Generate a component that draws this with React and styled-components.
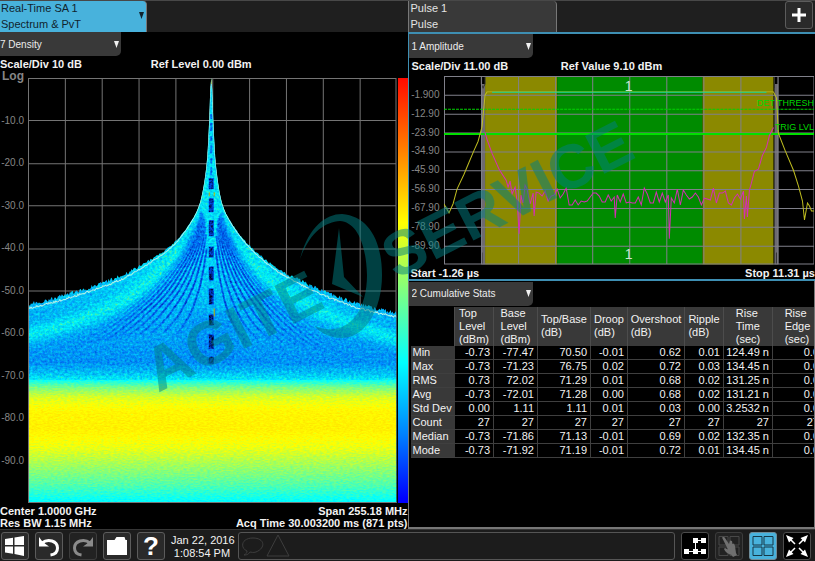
import React from "react";
import styled, { createGlobalStyle, css } from "styled-components";

const GlobalStyle = createGlobalStyle`
  * { box-sizing: border-box; }
  body { margin: 0; background: #000; }
  body, button, select { font-family: "Liberation Sans", Arial, sans-serif; }
`;

const blue = "#48b2dc";
const panel = "#393939";

const Screen = styled.div`
  position: relative;
  display: flex;
  flex-direction: column;
  min-height: 100vh;
  overflow: hidden;
  background: #000;
  color: #f2f2f2;
  font-size: 11px;
`;

const TabBar = styled.header`
  display: grid;
  grid-template-columns: minmax(0, 1fr) minmax(0, 1fr);
  height: 32px;
  background: #1f1f1f;
  border-top: 1px solid #484848;
`;

const TabGroup = styled.div`
  display: flex;
  justify-content: space-between;
`;

const Tab = styled.button`
  display: flex;
  align-items: center;
  justify-content: space-between;
  width: ${(p) => (p.$active ? 147 : 149)}px;
  height: 31px;
  padding: 0 2px 2px ${(p) => (p.$active ? 1 : 2)}px;
  border: 0;
  border-right: 1px solid #777;
  border-left: ${(p) => (p.$active ? "0" : "1px solid #777")};
  border-radius: 0 4px 0 0;
  background: ${(p) => (p.$active ? blue : panel)};
  color: ${(p) => (p.$active ? "#10242e" : "#e4e4e4")};
  font-size: 11px;
  line-height: 16px;
  text-align: left;
`;

const Main = styled.main`
  display: grid;
  flex: 1;
  grid-template-columns: minmax(0, 1fr) minmax(0, 1fr);
`;

const Pane = styled.section`
  display: flex;
  flex-direction: column;
  min-width: 0;
  min-height: 0;
  overflow: hidden;
`;

const RightColumn = styled.div`
  display: grid;
  grid-template-rows: minmax(0, 1fr) minmax(0, 1fr);
  min-height: 0;
`;

const PulsePane = styled(Pane)`
  border: solid #3e8fb3;
  border-width: 2px 0 2px 1px;
`;

const StatsPane = styled(Pane)`
  padding-top: 1px;
  border: solid #777;
  border-width: 0 1px 2px 1px;
`;

const Picker = styled.div`
  display: flex;
  align-items: center;
  position: relative;
  flex: none;
  width: ${(p) => (p.$wide ? 124 : 121)}px;
  height: 24px;
  border-radius: 0 0 5px 0;
  background: ${panel};
`;

const Select = styled.select`
  width: 100%;
  height: 24px;
  padding: 0 0 0 ${(p) => (p.$inset ? 3 : 0)}px;
  border: 0;
  background: transparent;
  color: #ececec;
  font-size: 10px;
  appearance: none;
`;

const Marker = styled.svg`
  width: 5px;
  height: 7px;
  fill: currentColor;
`;

const PickerMarker = styled(Marker)`
  position: absolute;
  right: 2px;
  pointer-events: none;
`;

const InfoRow = styled.div`
  display: grid;
  grid-template-columns: 37% 1fr;
  flex: none;
  height: ${(p) => (p.$tall ? 22 : 18)}px;
  padding-left: ${(p) => (p.$inset ? 3 : 0)}px;
  font-weight: bold;
  line-height: 16px;
  white-space: nowrap;
`;

const FooterBlock = styled.div`
  flex: none;
  padding: 2px 0 0 ${(p) => (p.$inset ? 2 : 0)}px;
`;

const FooterRow = styled.div`
  display: flex;
  justify-content: space-between;
  font-weight: bold;
  line-height: 12px;
  white-space: nowrap;
`;

const PlotRow = styled.div`
  display: flex;
  flex: 1;
  min-height: 0;
`;

const Axis = styled.div`
  display: grid;
  grid-template-rows: 1fr repeat(9, 2fr) 1fr;
  flex: none;
  align-items: center;
  width: ${(p) => (p.$wide ? 35 : 28)}px;
  padding-right: 4px;
  color: #868686;
  font-size: 10px;
  line-height: 12px;
  text-align: right;
`;

const AxisTitle = styled.span`
  align-self: start;
  margin-top: -8px;
  font-size: 12px;
  font-weight: bold;
`;

const Plot = styled.div`
  position: relative;
  flex: 1;
  min-width: 0;
  margin-right: 1px;
`;

const Chart = styled.svg`
  position: absolute;
  inset: 0;
  width: 100%;
  height: 100%;
`;

const ColorScale = styled.div`
  flex: none;
  width: 10px;
  background: linear-gradient(
    #ff0a00 0%, #ff8000 17%, #ffff00 34%, #80ff80 50%, #00ffff 67%, #0080ff 84%, #0000ff 99%
  );
`;

const PlotTag = styled.span`
  position: absolute;
  top: ${(p) => p.$top}%;
  right: ${(p) => p.$right}%;
  color: ${(p) => (p.$green ? "#00d800" : "#cfe8cf")};
  font-size: ${(p) => (p.$green ? 9 : 14)}px;
  line-height: 12px;
`;

const TableScroller = styled.div`
  margin: 1px 0 0 2px;
  overflow-x: auto;
  scrollbar-width: none;
`;

const Table = styled.table`
  table-layout: fixed;
  width: 412px;
  border-collapse: collapse;
  font-size: 11px;
`;

const Column = styled.col`
  width: ${(p) => p.$width}px;
`;

const HeadCell = styled.th`
  height: 39px;
  padding: 0;
  border-right: 1px solid #4c4c4c;
  background: ${(p) => (p.$blank ? "#000" : panel)};
  font-weight: normal;
  line-height: 13px;
  text-align: center;
  white-space: pre-line;
`;

const HeadLabel = styled.span`
  display: inline-block;
  text-align: left;
  vertical-align: middle;
`;

const cell = css`
  height: 14px;
  border-bottom: 1px solid #3f3f3f;
  font-weight: normal;
  line-height: 13px;
  white-space: nowrap;
`;

const RowHead = styled.th`
  ${cell}
  padding: 0 0 0 2px;
  background: ${panel};
  text-align: left;
`;

const Cell = styled.td`
  ${cell}
  padding: 0 3px 0 0;
  border-right: 1px solid #3f3f3f;
  text-align: right;
`;

const Toolbar = styled.footer`
  display: flex;
  align-items: flex-start;
  gap: 6px;
  height: 32px;
  padding: 2px 4px 0 1px;
  background: #1c1c1c;
  border-top: 1px solid #363636;
`;

const tones = {
  normal: ["#2a2a2a", "#5c5c5c", "#fff"],
  dim: ["#222", "#3c3c3c", "#8b8b8b"],
  dark: ["#000", "#4c4c4c", "#fff"],
  active: [blue, "#6e8c99", "#153746"],
};

const IconButton = styled.button`
  display: flex;
  flex: none;
  align-items: center;
  justify-content: center;
  width: 28px;
  height: 28px;
  padding: 0;
  border: 1px solid ${(p) => tones[p.$tone || "normal"][1]};
  border-radius: 3px;
  background: ${(p) => tones[p.$tone || "normal"][0]};
  color: ${(p) => tones[p.$tone || "normal"][2]};
`;

const AddButton = styled(IconButton)`
  margin-right: 2px;
`;

const Icon = styled.svg`
  display: block;
  width: 24px;
  height: 24px;
  fill: currentColor;
`;

const HelpMark = styled.span`
  font-size: 26px;
  font-weight: bold;
  line-height: 26px;
`;

const Clock = styled.time`
  flex: none;
  width: 62px;
  padding-top: 2px;
  line-height: 13px;
  text-align: center;
  white-space: nowrap;
`;

const MessageBox = styled.div`
  display: flex;
  flex: 1;
  align-items: center;
  gap: 1px;
  height: 28px;
  margin-left: -1px;
  padding-left: 2px;
  border: 1px solid #555;
  border-radius: 3px;
  color: #3d3d3d;
`;

const Overlay = styled.svg`
  position: absolute;
  inset: 0;
  width: 100%;
  height: 100%;
  fill: #008084;
  opacity: 0.5;
  pointer-events: none;
  font-family: "Liberation Sans", Arial, sans-serif;
  font-size: 62px;
  font-weight: bold;
`;

function makeRandom(seed) {
  let s = seed;
  return () => {
    s = (s * 16807) % 2147483647;
    return s / 2147483647;
  };
}

const leftEdge = [[0, 0], [1, 10], [2, 42], [4, 82], [8, 112], [12, 128], [17, 139], [27, 154], [37, 167], [54, 179], [74, 192], [92, 202], [112, 209], [148, 220], [184, 231], [3000, 560]];
const rightEdge = [[0, 0], [1, 10], [2, 42], [4, 82], [8, 114], [12, 130], [18, 142], [28, 157], [38, 169], [58, 187], [78, 200], [98, 209], [118, 219], [138, 226], [158, 232], [185, 239], [3000, 560]];

function lookUp(table, d) {
  const i = table.findIndex((p) => p[0] >= d);
  if (i <= 0) return 0;
  const [x0, y0] = table[i - 1];
  const [x1, y1] = table[i];
  return y0 + ((d - x0) / (x1 - x0)) * (y1 - y0);
}

function edgeAt(dx) {
  const table = dx < 0 ? leftEdge : rightEdge;
  const d = Math.abs(dx);
  let sum = 0;
  for (let k = -4; k <= 4; k += 1) sum += lookUp(table, d * (1 + k * 0.06));
  return sum / 9;
}

const CENTER = 184;
const join = (pts) => pts.map((p) => p.join(",")).join(" ");

function buildDensity() {
  const rnd = makeRandom(77);
  const outline = [[0, 424]];
  const trace = [];
  for (let x = 0; x <= 370; x += 1) {
    const dx = x - CENTER;
    const y = edgeAt(dx);
    const far = Math.min(1, Math.abs(dx) / 90);
    outline.push([x, (y - far * (1 + rnd() * 4)).toFixed(1)]);
    trace.push([x, (y + far * rnd() * 2).toFixed(1)]);
  }
  outline.push([370, 424]);
  const lobes = [];
  for (let k = 1; k <= 11; k += 1) {
    const f = 0.04 + k * 0.074;
    [-1, 1].forEach((side) => {
      const pts = [];
      for (let d = 4 + k * 0.6; d <= 24 + k * 12; d += 1) {
        const y = edgeAt((side * d) / f) + d * 0.3;
        if (y < 286) pts.push([(CENTER + side * d).toFixed(1), y.toFixed(1)]);
      }
      lobes.push({ pts, strength: k < 8 ? 1 : 1 - (k - 7) * 0.2 });
    });
  }
  return { outline, trace, lobes };
}

const density = buildDensity();

function Grid({ width, height, color }) {
  const lines = [];
  for (let i = 0; i <= 10; i += 1) {
    const x = Math.min(width - 1, Math.round((width * i) / 10)) + 0.5;
    const y = Math.min(height - 1, Math.round((height * i) / 10)) + 0.5;
    lines.push(`M${x} 0V${height}M0 ${y}H${width}`);
  }
  return <path d={lines.join("")} stroke={color} fill="none" />;
}

const jet = {
  r: "0 0 0 0 0 .5 1 1",
  g: "0 .25 .5 .75 1 1 1 .78",
  b: ".1 .85 1 1 1 .5 0 0",
};

function HeatFilter({ id, gain, offset, frequency }) {
  return (
    <filter id={id} filterUnits="userSpaceOnUse" x="0" y="0" width="370" height="424" colorInterpolationFilters="sRGB">
      <feTurbulence type="fractalNoise" baseFrequency={frequency} numOctaves="2" seed="5" />
      <feColorMatrix values="1 0 0 0 0 1 0 0 0 0 1 0 0 0 0 0 0 0 0 1" result="noise" />
      <feComposite in="SourceGraphic" in2="noise" operator="arithmetic" k1="0" k2="1" k3={gain} k4={offset} />
      <feComponentTransfer>
        <feFuncR type="table" tableValues={jet.r} />
        <feFuncG type="table" tableValues={jet.g} />
        <feFuncB type="table" tableValues={jet.b} />
      </feComponentTransfer>
    </filter>
  );
}

const gray = (v) => `rgb(${Math.round(v * 255)},${Math.round(v * 255)},${Math.round(v * 255)})`;
const upperStops = [[0, 0.5], [0.4, 0.54], [0.6, 0.5], [0.75, 0.44], [0.88, 0.37], [0.94, 0.34], [0.97, 0.44], [1, 0.57]];
const lowerStops = [[0, 0.57], [0.06, 0.7], [0.14, 0.81], [0.26, 0.88], [0.4, 0.89], [0.56, 0.83], [0.7, 0.75], [0.86, 0.66], [1, 0.56]];

function Stops({ list }) {
  return list.map(([at, v]) => <stop key={at} offset={at} stopColor={gray(v)} />);
}

function DensityChart() {
  return (
    <Chart viewBox="0 0 370 424" preserveAspectRatio="none" role="img" aria-label="Spectrum density">
      <defs>
        <linearGradient id="upper" x2="0" y2="1"><Stops list={upperStops} /></linearGradient>
        <linearGradient id="lower" x2="0" y2="1"><Stops list={lowerStops} /></linearGradient>
        <linearGradient id="lobe" gradientUnits="userSpaceOnUse" x1="0" x2="0" y1="110" y2="286">
          <stop offset="0" stopColor="#000" stopOpacity="0.1" />
          <stop offset="0.35" stopColor="#000" stopOpacity="0.6" />
          <stop offset="0.65" stopColor="#000" stopOpacity="0.55" />
          <stop offset="1" stopColor="#000" stopOpacity="0" />
        </linearGradient>
        <filter id="soft" filterUnits="userSpaceOnUse" x="-20" y="-20" width="410" height="470"><feGaussianBlur stdDeviation="5" /></filter>
        <HeatFilter id="heatUpper" gain="0.34" offset="-0.17" frequency="0.4 0.4" />
        <HeatFilter id="heatLower" gain="0.13" offset="-0.065" frequency="0.3 0.7" />
        <clipPath id="signal"><polygon points={join(density.outline)} /></clipPath>
      </defs>
      <Grid width={370} height={424} color="#747474" />
      <g clipPath="url(#signal)">
        <g filter="url(#heatUpper)">
          <rect width="370" height="424" fill={gray(0.57)} />
          <rect width="370" height="302" fill="url(#upper)" />
          <g filter="url(#soft)" fill="none">
            <path d="M-5 258C60 242 110 225 155 170" stroke={gray(0.6)} strokeWidth="12" />
            <path d="M375 262C320 246 250 222 210 168" stroke={gray(0.58)} strokeWidth="12" />
            <path d="M184 235V285" stroke={gray(0.3)} strokeWidth="50" strokeOpacity="0.5" />
          </g>
          <g fill="none">
            {density.lobes.map((lobe, i) => (
              <polyline key={i} points={join(lobe.pts)} stroke="url(#lobe)" strokeWidth="2" strokeOpacity={lobe.strength} />
            ))}
            <path d="M184 36V100" stroke={gray(0.25)} strokeWidth="2" strokeDasharray="5 4 8 5" />
            <path d="M184 100V285" stroke="#000" strokeWidth="5" strokeDasharray="11 9 14 8 16 10" strokeOpacity="0.8" />
          </g>
        </g>
        <polyline points={join(density.trace)} fill="none" stroke="#bdfff0" strokeWidth="1" />
        <path d="M184 0V6M182 114V118M187 114V118M187 230V238" stroke="#c8b800" fill="none" />
        <g filter="url(#heatLower)">
          <rect y="301" width="370" height="123" fill="url(#lower)" />
        </g>
      </g>
      <path d="M0.5 0V423.5H370" stroke="#747474" fill="none" />
    </Chart>
  );
}

function buildFloorTrace() {
  const rnd = makeRandom(4021);
  const pts = [[41, 57], [43, 64], [48, 78], [55, 94], [62, 105], [64, 112], [66, 106], [68, 119], [71, 112], [73, 126], [75, 159], [77, 120], [79, 128], [81, 110]];
  const spikes = { 91: 141, 170: 143, 224: 164, 300: 144, 304: 142 };
  for (let x = 83; x <= 306; x += 3) {
    pts.push([x, 122 + (rnd() - 0.5) * 18]);
    const hit = Object.keys(spikes).find((s) => Number(s) >= x && Number(s) < x + 3);
    if (hit) pts.push([x + 1, spikes[hit]]);
  }
  pts.push([307, 108], [310, 96], [314, 94], [318, 80], [322, 72], [325, 60], [329, 52]);
  return pts.map(([x, y]) => [x, Math.round(y)]);
}

const floorTrace = buildFloorTrace();

function PulseChart() {
  return (
    <Chart viewBox="0 0 370 190" preserveAspectRatio="none" role="img" aria-label="Pulse amplitude">
      <path d="M41 0H113V190H41ZM258 0H329V190H258Z" fill="#8b8900" />
      <path d="M113 0H258V190H113Z" fill="#008b00" />
      <path d="M37 8H41V190H37ZM330 8H334V190H330Z" fill="#6d6a70" />
      <path d="M37 0V8L39 12L41 8V0M330 0V12M334 0V10M38 190V178M332 190V178" stroke="#333" fill="none" />
      <Grid width={370} height={190} color="#80808a" />
      <path d="M0 33.5H370" stroke="#00d400" strokeWidth="1" strokeDasharray="3 1" />
      <path d="M0 58.5H370" stroke="#00e000" strokeWidth="2" />
      <polyline points={join(floorTrace)} fill="none" stroke="#d42fb4" />
      <path d="M0 129L5 138L9 129L13 114L20 99L25 87L30 75L34 66L38 51L41 19L43 16H325M325 16L329 16L332 22L334 58L341 76L349 95L354 111L358 126L360 145L363 128L365 131L367 136H370" fill="none" stroke="#bfbd20" strokeWidth="1" />
      <path d="M48 16.5H322" stroke="#12d69c" strokeWidth="1" shapeRendering="crispEdges" />
    </Chart>
  );
}

const Down = ({ as: Tag = Marker }) => (
  <Tag viewBox="0 0 5 7" aria-hidden="true"><path d="M0 0H5L2.5 7Z" /></Tag>
);

function WindowPicker({ label, options, wide }) {
  return (
    <Picker $wide={wide}>
      <Select aria-label={label} $inset={wide} defaultValue={options[0]}>
        {options.map((o) => <option key={o}>{o}</option>)}
      </Select>
      <Down as={PickerMarker} />
    </Picker>
  );
}

const headers = ["Top\nLevel\n(dBm)", "Base\nLevel\n(dBm)", "Top/Base\n(dB)", "Droop\n(dB)", "Overshoot\n(dB)", "Ripple\n(dB)", "Rise\nTime\n(sec)", "Rise\nEdge\n(sec)"];
const widths = [44, 39, 44, 53, 37, 57, 39, 49, 50];
const rows = [
  ["Min", "-0.73", "-77.47", "70.50", "-0.01", "0.62", "0.01", "124.49 n", "0.0"],
  ["Max", "-0.73", "-71.23", "76.75", "0.02", "0.72", "0.03", "134.45 n", "0.0"],
  ["RMS", "0.73", "72.02", "71.29", "0.01", "0.68", "0.02", "131.25 n", "0.0"],
  ["Avg", "-0.73", "-72.01", "71.28", "0.00", "0.68", "0.02", "131.21 n", "0.0"],
  ["Std Dev", "0.00", "1.11", "1.11", "0.01", "0.03", "0.00", "3.2532 n", "0.0"],
  ["Count", "27", "27", "27", "27", "27", "27", "27", "27"],
  ["Median", "-0.73", "-71.86", "71.13", "-0.01", "0.69", "0.02", "132.35 n", "0.0"],
  ["Mode", "-0.73", "-71.92", "71.19", "-0.01", "0.72", "0.01", "134.45 n", "0.0"],
];

function StatsTable() {
  return (
    <TableScroller>
      <Table>
        <colgroup>{widths.map((w, i) => <Column key={i} $width={w} />)}</colgroup>
        <thead>
          <tr>
            <HeadCell as="td" $blank />
            {headers.map((h) => <HeadCell key={h} scope="col"><HeadLabel>{h}</HeadLabel></HeadCell>)}
          </tr>
        </thead>
        <tbody>
          {rows.map(([name, ...values]) => (
            <tr key={name}>
              <RowHead scope="row">{name}</RowHead>
              {values.map((v, i) => <Cell key={i}>{v}</Cell>)}
            </tr>
          ))}
        </tbody>
      </Table>
    </TableScroller>
  );
}

const WindowsIcon = () => (
  <Icon viewBox="0 0 24 24"><path d="M2 5L10 3.8V11H2ZM11.5 3.5L21 2V11H11.5ZM2 12.5H10V19.7L2 18.5ZM11.5 12.5H21V22L11.5 20Z" /></Icon>
);
const UndoIcon = () => (
  <Icon viewBox="0 0 24 24">
    <path d="M5 9C11 4 20.5 7 20.5 14C20.5 18 17.5 20.5 13.5 21" fill="none" stroke="currentColor" strokeWidth="3" />
    <path d="M2 3V12.5H12L8.5 10L5 7Z" />
  </Icon>
);
const RedoIcon = () => (
  <Icon viewBox="0 0 24 24">
    <path d="M19 9C13 4 3.5 7 3.5 14C3.5 18 6.5 20.5 10.5 21" fill="none" stroke="currentColor" strokeWidth="3" />
    <path d="M22 3V12.5H12L15.5 10L19 7Z" />
  </Icon>
);
const FolderIcon = () => (
  <Icon viewBox="0 0 24 24"><path d="M2 6H9.5L11.5 3H19.5L20.5 6H22V21H2Z" /></Icon>
);
const PlusIcon = () => (
  <Icon viewBox="0 0 24 24"><path d="M10.5 5H13.5V10.5H19V13.5H13.5V19H10.5V13.5H5V10.5H10.5Z" /></Icon>
);
const BlocksIcon = () => (
  <Icon viewBox="0 0 24 24">
    <path d="M10 4H15V9H10ZM18 4H23V9H18ZM1 15H6V20H1ZM10 15H15V20H10ZM18 15H23V20H18Z" />
    <path d="M15 6.5H18M12.5 9V15M6 17.5H18" stroke="currentColor" fill="none" />
  </Icon>
);
const FourWindows = "M2 2.5H11V11H2ZM13 2.5H22V11H13ZM2 13H11V21.5H2ZM13 13H22V21.5H13Z";
const TouchIcon = () => (
  <Icon viewBox="0 0 24 24">
    <path d={FourWindows} fill="none" stroke="#484848" />
    <path d="M5 3.5C6 2.5 7.5 3 8 4L12 10L13 6.5L15 7L15.5 10L17 9.5L18 12L19 19L20 21L16 23L14.5 21C11 20 8 18 7 15L8 14L11 15.5Z" fill="#707070" />
  </Icon>
);
const LayoutIcon = () => (
  <Icon viewBox="0 0 24 24"><path d={FourWindows} fill="none" stroke="currentColor" /></Icon>
);
const ExpandIcon = () => (
  <Icon viewBox="0 0 24 24">
    <path d="M4 4L10 10M20 4L14 10M4 20L10 14M20 20L14 14" stroke="currentColor" strokeWidth="1.5" />
    <path d="M1 1L8.5 4L4 8.5ZM23 1L20 8.5L15.5 4ZM1 23L4 15.5L8.5 20ZM23 23L15.5 20L20 15.5Z" />
  </Icon>
);
const BalloonIcon = () => (
  <Icon viewBox="0 0 24 24"><path d="M6 17C-1 14 0 4 12 4S25 14 15 18C12 19 10 18 9 18C7 21 5 21 3 21C5 20 6 19 6 17Z" fill="none" stroke="currentColor" /></Icon>
);
const WarningIcon = () => (
  <Icon viewBox="0 0 24 24"><path d="M12 1L23 22H1Z" fill="none" stroke="currentColor" /></Icon>
);

export default function App() {
  return (
    <Screen>
      <GlobalStyle />
      <TabBar>
        <TabGroup>
          <Tab $active>
            <span>Real-Time SA 1<br />Spectrum &amp; PvT</span>
            <Down />
          </Tab>
        </TabGroup>
        <TabGroup>
          <Tab><span>Pulse 1<br />Pulse</span></Tab>
          <AddButton aria-label="Add screen"><PlusIcon /></AddButton>
        </TabGroup>
      </TabBar>
      <Main>
        <Pane>
          <WindowPicker label="Left window view" options={["7 Density", "1 Spectrum"]} />
          <InfoRow $tall>
            <span>Scale/Div 10 dB</span>
            <span>Ref Level 0.00 dBm</span>
          </InfoRow>
          <PlotRow>
            <Axis>
              <AxisTitle>Log</AxisTitle>
              {["-10.0", "-20.0", "-30.0", "-40.0", "-50.0", "-60.0", "-70.0", "-80.0", "-90.0"].map((v) => <span key={v}>{v}</span>)}
            </Axis>
            <Plot><DensityChart /></Plot>
            <ColorScale />
          </PlotRow>
          <FooterBlock>
            <FooterRow><span>Center 1.0000 GHz</span><span>Span 255.18 MHz</span></FooterRow>
            <FooterRow><span>Res BW 1.15 MHz</span><span>Acq Time 30.003200 ms (871 pts)</span></FooterRow>
          </FooterBlock>
        </Pane>
        <RightColumn>
          <PulsePane>
            <WindowPicker wide label="Pulse trace view" options={["1 Amplitude", "2 Frequency"]} />
            <InfoRow $inset>
              <span>Scale/Div 11.00 dB</span>
              <span>Ref Value 9.10 dBm</span>
            </InfoRow>
            <PlotRow>
              <Axis $wide>
                <span />
                {["-1.900", "-12.90", "-23.90", "-34.90", "-45.90", "-56.90", "-67.90", "-78.90", "-89.90"].map((v) => <span key={v}>{v}</span>)}
              </Axis>
              <Plot>
                <PulseChart />
                <PlotTag $top={2} $right={49}>1</PlotTag>
                <PlotTag $top={91} $right={49}>1</PlotTag>
                <PlotTag $green $top={11} $right={0}>DET THRESH</PlotTag>
                <PlotTag $green $top={24} $right={0}>TRIG LVL</PlotTag>
              </Plot>
            </PlotRow>
            <FooterBlock $inset>
              <FooterRow><span>Start -1.26 µs</span><span>Stop 11.31 µs</span></FooterRow>
            </FooterBlock>
          </PulsePane>
          <StatsPane>
            <WindowPicker wide label="Statistics view" options={["2 Cumulative Stats", "3 Pulse Table"]} />
            <StatsTable />
          </StatsPane>
        </RightColumn>
      </Main>
      <Toolbar>
        <IconButton aria-label="Start"><WindowsIcon /></IconButton>
        <IconButton aria-label="Undo"><UndoIcon /></IconButton>
        <IconButton aria-label="Redo" $tone="dim"><RedoIcon /></IconButton>
        <IconButton aria-label="Open"><FolderIcon /></IconButton>
        <IconButton aria-label="Help"><HelpMark>?</HelpMark></IconButton>
        <Clock dateTime="2016-01-22T13:08:54">Jan 22, 2016<br />1:08:54 PM</Clock>
        <MessageBox><BalloonIcon /><WarningIcon /></MessageBox>
        <IconButton aria-label="Block diagram" $tone="dark"><BlocksIcon /></IconButton>
        <IconButton aria-label="Touch" $tone="dim"><TouchIcon /></IconButton>
        <IconButton aria-label="Multiple windows" $tone="active"><LayoutIcon /></IconButton>
        <IconButton aria-label="Full screen" $tone="dark"><ExpandIcon /></IconButton>
      </Toolbar>
      <Overlay viewBox="0 0 815 561" preserveAspectRatio="none" aria-hidden="true">
        <text transform="translate(158 393) rotate(-27)">AGITE</text>
        <text transform="translate(396 280) rotate(-27)">SERVICE</text>
        <path d="M300 259C308 228 325 214 342 214C368 216 382 240 382 275C382 310 365 338 342 338C328 338 318 331 315 326C345 338 367 315 367 275C366 240 355 222 340 221C325 222 310 232 300 259Z" />
        <path d="M339 228L344 277L363 297L332 284Z" />
      </Overlay>
    </Screen>
  );
}
